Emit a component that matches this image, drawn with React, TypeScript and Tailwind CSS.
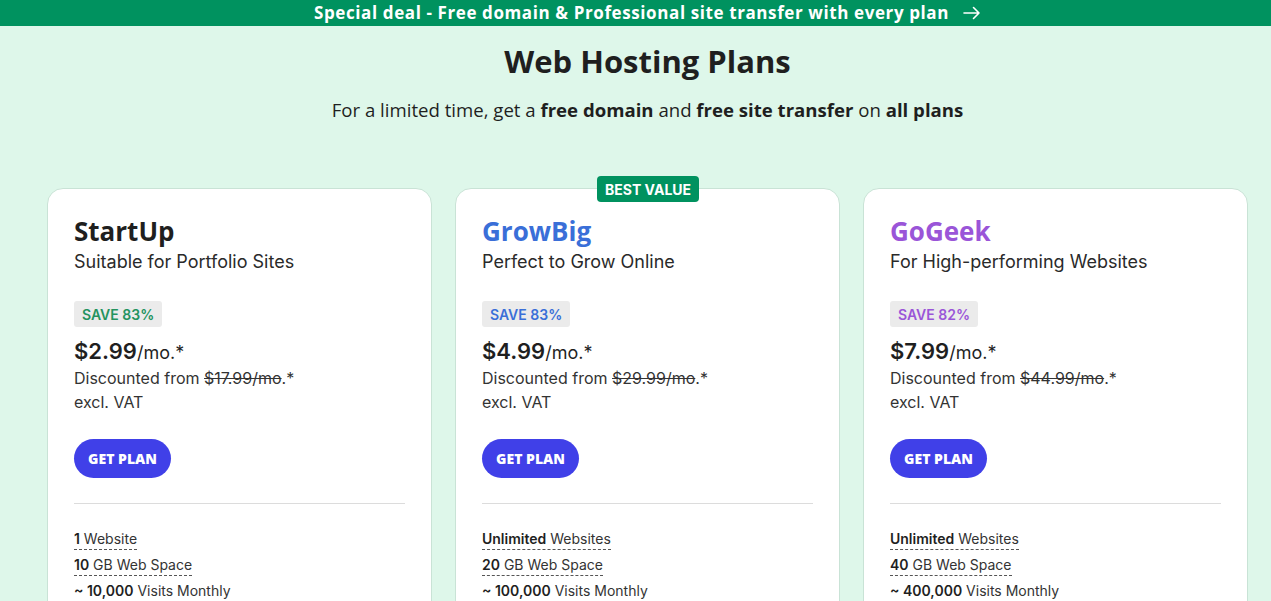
import React from "react";

const heading = { fontFamily: '"Open Sans", "Noto Sans", sans-serif' };

type Plan = {
  name: string;
  tagline: string;
  save: string;
  price: string;
  old: string;
  color: string;
  features: [string, string][];
  best?: boolean;
};

const plans: Plan[] = [
  {
    name: "StartUp",
    tagline: "Suitable for Portfolio Sites",
    save: "SAVE 83%",
    price: "$2.99",
    old: "$17.99/mo",
    color: "text-[#1f1f1f]",
    features: [
      ["1", "Website"],
      ["10", "GB Web Space"],
      ["~ 10,000", "Visits Monthly"],
    ],
  },
  {
    name: "GrowBig",
    tagline: "Perfect to Grow Online",
    save: "SAVE 83%",
    price: "$4.99",
    old: "$29.99/mo",
    color: "text-[#3a6fd8]",
    best: true,
    features: [
      ["Unlimited", "Websites"],
      ["20", "GB Web Space"],
      ["~ 100,000", "Visits Monthly"],
    ],
  },
  {
    name: "GoGeek",
    tagline: "For High-performing Websites",
    save: "SAVE 82%",
    price: "$7.99",
    old: "$44.99/mo",
    color: "text-[#9a55d8]",
    features: [
      ["Unlimited", "Websites"],
      ["40", "GB Web Space"],
      ["~ 400,000", "Visits Monthly"],
    ],
  },
];

const saveColors = ["text-[#24935f]", "text-[#3a6fd8]", "text-[#9a55d8]"];

export default function App() {
  return (
    <div
      className="w-[1271px] h-[601px] overflow-hidden bg-[#def7ea] text-[#1f1f1f]"
      style={{ fontFamily: 'Inter, "Noto Sans", sans-serif' }}
    >
      <div
        className="h-[26px] bg-[#00925f] flex items-center justify-center pl-[24px] text-white text-[17px] font-bold gap-[14px] tracking-[0.6px]"
        style={heading}
      >
        <span>Special deal - Free domain &amp; Professional site transfer with every plan</span>
        <svg width="18" height="14" viewBox="0 0 18 14" fill="none" stroke="white" strokeWidth="1.6" strokeLinecap="round" strokeLinejoin="round">
          <path d="M1 7h15M10.5 1.5 16 7l-5.5 5.5" />
        </svg>
      </div>
      <div className="flex flex-col items-center pl-[24px]">
        <h1 className="mt-[15px] text-[31px] leading-[40px] font-bold text-[#1f1f1f]" style={heading}>
          Web Hosting Plans
        </h1>
        <p className="mt-[16px] text-[18.6px] leading-[26px] text-[#1f1f1f]" style={heading}>
          For a limited time, get a <b className="font-bold">free domain</b> and{" "}
          <b className="font-bold">free site transfer</b> on <b className="font-bold">all plans</b>
        </p>
      </div>
      <div className="mt-[65px] flex gap-[23px] pl-[47px]">
        {plans.map((p, i) => (
          <div
            key={p.name}
            className="relative w-[385px] h-[440px] bg-white border border-[#c9e3d6] rounded-[16px] px-[26px] pt-[25px]"
          >
            {p.best && (
              <div className="absolute top-[-13px] left-[141px] h-[26px] px-[8px] rounded-[4px] bg-[#00925f] text-white text-[14px] font-bold flex items-center">
                BEST VALUE
              </div>
            )}
            <div className={`text-[26px] leading-[34px] font-bold ${p.color}`} style={heading}>
              {p.name}
            </div>
            <div className="mt-[2px] text-[18px] leading-[24px] text-[#2a2a2a]">{p.tagline}</div>
            <div className={`mt-[27px] inline-flex h-[26px] items-center px-[8px] rounded-[3px] bg-[#ebebeb] text-[14px] font-semibold ${saveColors[i]}`}>
              {p.save}
            </div>
            <div className="mt-[9px] text-[18px] leading-[30px] text-[#1f1f1f]">
              <span className="text-[22px] font-semibold">{p.price}</span>/mo.*
            </div>
            <div className="mt-[-2px] text-[16px] leading-[24px] text-[#333]">
              Discounted from <span className="line-through">{p.old}</span>.*
            </div>
            <div className="text-[16px] leading-[24px] text-[#333]">excl. VAT</div>
            <button className="mt-[25px] h-[39px] w-[97px] rounded-full bg-[#4040e8] text-white text-[14px] font-extrabold" style={heading}>
              GET PLAN
            </button>
            <div className="mt-[25px] h-px bg-[#dcdcdc]" />
            <div className="mt-[25px] flex flex-col gap-[5px] items-start">
              {p.features.map(([b, r]) => (
                <span
                  key={r}
                  className="text-[14px] leading-[20px] text-[#333] border-b border-dashed border-[#555]"
                >
                  <b className="font-semibold text-[#1f1f1f]">{b}</b> {r}
                </span>
              ))}
            </div>
          </div>
        ))}
      </div>
    </div>
  );
}
